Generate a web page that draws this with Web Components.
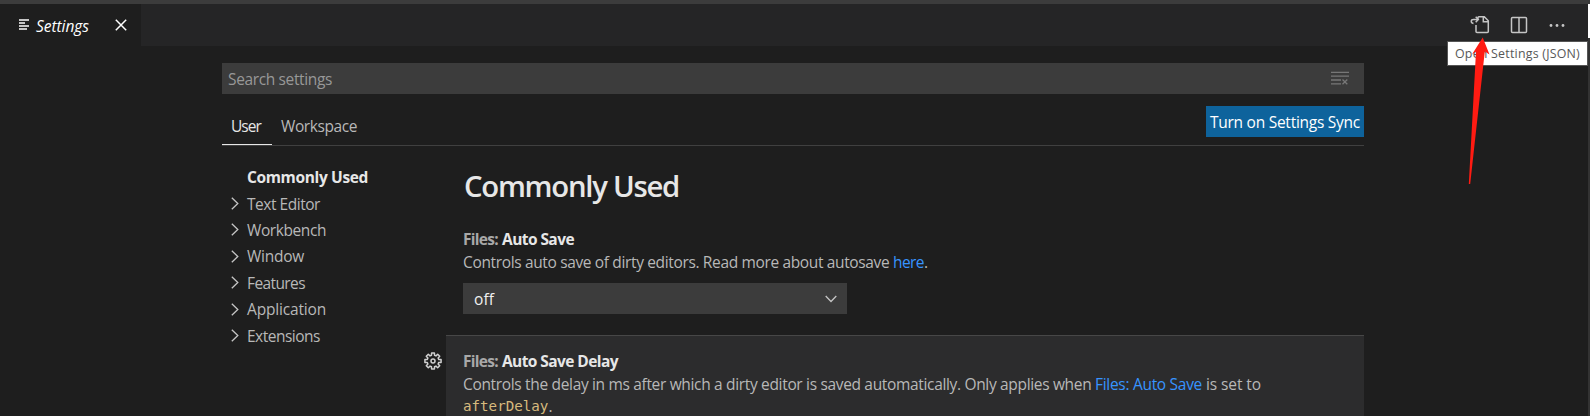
<!DOCTYPE html>
<html lang="en">
<head>
<meta charset="utf-8">
<title>Settings</title>
<style>
html,body{margin:0;background:#1e1e1e}
body{width:1590px;height:416px;overflow:hidden;font:15.5px/24px "Open Sans","Noto Sans",sans-serif;color:#b8b8b8}
</style>
</head>
<body>
<settings-window></settings-window>
<script>
const define = (name, html, ready) => customElements.define(name, class extends HTMLElement {
  constructor() {
    super();
    this.attachShadow({ mode: "open" }).innerHTML = html;
  }
  connectedCallback() { if (ready) ready(this, this.shadowRoot); }
});

/* A run of text whose tracking is adjusted to fill the width in "w". */
define("fit-text", `<style>:host{display:inline-block;white-space:pre}span{display:inline-block}</style><span><slot></slot></span>`, (el, root) => {
  const span = root.querySelector("span"), w = +el.getAttribute("w"), n = el.textContent.length;
  el.style.width = w + "px";
  span.style.letterSpacing = (w - span.getBoundingClientRect().width) / n + "px";
});

define("editor-tab", `<style>
:host{display:flex;align-items:center;width:141px;height:42px;background:#1e1e1e;color:#fff;font-style:italic;box-sizing:border-box;padding-left:18px}
.x{margin-left:26px}svg{display:block}fit-text{margin-left:6px;padding-top:1px}
</style>
<svg width="12" height="12" viewBox="0 0 12 12" fill="#c5c5c5"><path d="M1 0h10v2H1zM1 3h6v2H1zM1 6h10v2H1zM1 9h8v2H1z"/></svg>
<fit-text w="53">Settings</fit-text>
<svg class="x" width="12" height="12" viewBox="0 0 12 12" stroke="#fff" stroke-width="1.5"><path d="M.8.8l10.4 10.4M11.2.8L.8 11.2"/></svg>`);

define("editor-actions", `<style>
:host{display:flex;align-items:center;height:42px;gap:20px;margin-right:22px}svg{display:block}
</style>
<svg width="20" height="20" viewBox="0 0 20 20" fill="none" stroke="#c5c5c5" stroke-width="1.5"><path d="M8 4V2.5Q8 1.7 8.8 1.7H14.3L18.3 5.8V16.4Q18.3 17.4 17.3 17.4H7Q6 17.4 6 16.4V10M13.3 1.7V6.7H18.3M3.5 8.5C.4 7.7.6 4.4 3.5 4.4H8M5.7 1.8L8.3 4.4L5.7 7.2"/></svg>
<svg width="18" height="18" viewBox="0 0 18 18" fill="none" stroke="#c5c5c5" stroke-width="1.5"><rect x="1.5" y="1.5" width="15" height="15" rx="1"/><path d="M9 2v14"/></svg>
<svg width="18" height="18" viewBox="0 0 18 18" fill="#c5c5c5"><circle cx="3" cy="9.5" r="1.4"/><circle cx="9" cy="9.5" r="1.4"/><circle cx="15" cy="9.5" r="1.4"/></svg>`);

define("search-box", `<style>
:host{display:flex;align-items:center;justify-content:space-between;height:31px;background:#3c3c3c;color:#989898;padding:0 15px 0 6px}
svg{display:block;margin-top:-2px}fit-text{padding-top:1px}
</style>
<fit-text w="104">Search settings</fit-text>
<svg width="18" height="14" viewBox="0 0 18 14" stroke="#777" stroke-width="1.3"><path d="M0 1.3h18M0 5.1h18M0 9h10M0 12.8h10M11.5 8.5l4.8 4.8M16.3 8.5l-4.8 4.8"/></svg>`);

define("scope-tabs", `<style>
:host{display:flex;justify-content:space-between;height:39px;border-bottom:1px solid #404040;margin-top:12px}
.tabs{display:flex}
.tab{height:39px;padding:4px 11px 0 9px;line-height:32px;box-sizing:border-box}
.on{color:#e7e7e7;border-bottom:1px solid #e7e7e7}
button{all:unset;height:31px;width:158px;background:#0e639c;color:#fff;text-align:center;line-height:33px}
</style>
<div class="tabs"><div class="tab on"><fit-text w="30">User</fit-text></div><div class="tab"><fit-text w="76">Workspace</fit-text></div></div>
<button><fit-text w="150">Turn on Settings Sync</fit-text></button>`);

define("toc-item", `<style>
:host{display:flex;align-items:center;height:26.4px;line-height:26px}
svg{width:8px;height:13px;margin:0 8px 0 9px}
:host([selected]) svg{visibility:hidden}
:host([selected]){font-weight:700;color:#e7e7e7}
</style>
<svg viewBox="0 0 8 13" fill="none" stroke="#c5c5c5" stroke-width="1.3"><path d="M.8.7l6 5.8-6 5.8"/></svg><slot></slot>`);

define("setting-item", `<style>
:host{display:block;padding:0 17px}
.title{font-weight:700;height:24px;display:flex;gap:4px;color:#a8a8a8}
.name{color:#e7e7e7}
.desc{line-height:22px;white-space:nowrap}
</style>
<div class="title"><slot name="cat"></slot><span class="name"><slot name="name"></slot></span></div>
<div class="desc"><slot></slot></div>`);

define("select-box", `<style>
:host{display:flex;align-items:center;justify-content:space-between;width:384px;height:31px;background:#3c3c3c;color:#f0f0f0;box-sizing:border-box;padding:0 10px 0 11px}
fit-text{padding-top:1px}
</style><slot></slot>
<svg width="12" height="8" viewBox="0 0 12 8" fill="none" stroke="#c5c5c5" stroke-width="1.3"><path d="M.7 1l5.3 5.5L11.3 1"/></svg>`);

define("gear-icon", `<style>:host{display:block;width:18px;height:18px}svg{display:block}</style>
<svg width="18" height="18" viewBox="-9 -9 18 18" fill="none" stroke="#d0d0d0" stroke-width="1.5" stroke-linejoin="round"><path/><circle r="2"/></svg>`, (el, root) => {
  let d = "";
  for (let i = 0; i < 8; i++) for (const [off, r] of [[-15, 5.9], [-10, 8.2], [10, 8.2], [15, 5.9]]) {
    const a = (i * 45 + off) * Math.PI / 180;
    d += (d ? "L" : "M") + (r * Math.cos(a)).toFixed(2) + " " + (r * Math.sin(a)).toFixed(2);
  }
  root.querySelector("path").setAttribute("d", d + "Z");
});

define("tool-tip", `<style>
:host{position:absolute;left:1447px;top:41px;width:141px;height:25px;box-sizing:border-box;background:#fff;border:1px solid #555;color:#575757;font-size:12.4px;line-height:23px;padding-left:7px}
</style><slot></slot>`);

define("pointer-arrow", `<style>:host{position:absolute;left:1460px;top:36px}svg{display:block}</style>
<svg width="40" height="150" viewBox="0 0 40 150"><path fill="#ff1b12" d="M22.7 1.5L29.5 18.5L24.8 15.5L10.2 148H8.8L16 15.5L12 18.5Z"/></svg>`);

define("settings-window", `<style>
:host{display:block;position:relative;width:1590px;height:416px;overflow:hidden;background:#1e1e1e}
.top{height:4px;background:#3c3c3c}
.bar{display:flex;justify-content:space-between;height:42px;background:#252526;margin-right:2px}
.page{width:1142px;margin:17px 0 0 222px}
search-box{box-sizing:border-box}
.cols{display:grid;grid-template-columns:224px 918px}
nav{padding-top:18px}
h1{margin:20px 0 0 18px;font-size:29.3px;line-height:40px;font-weight:600;color:#e7e7e7;height:40px}
.first{margin-top:21px}
.row{display:flex;margin-left:-22px;margin-top:21px}
gear-icon{margin:17px 4px 0 0}
.panel{width:918px;height:90px;border-top:1px solid #474747;background:#2c2c2d;box-sizing:border-box;flex:none;padding-top:13px}
a{color:#3794ff}
code{font:14.2px/20px "DejaVu Sans Mono",monospace;color:#d7ba7d;position:relative;top:-1px}
select-box{margin:10px 0 0 17px}
.edge{position:absolute;right:0;top:0;width:2px;height:416px;background:linear-gradient(#3c3c3c 4px,#fff 4px 38px,#333 38px)}
</style>
<div class="top"></div>
<div class="bar"><editor-tab></editor-tab><editor-actions></editor-actions></div>
<div class="page">
<search-box></search-box>
<scope-tabs></scope-tabs>
<div class="cols">
<nav>
<toc-item selected><fit-text w="121">Commonly Used</fit-text></toc-item>
<toc-item><fit-text w="73">Text Editor</fit-text></toc-item>
<toc-item><fit-text w="79">Workbench</fit-text></toc-item>
<toc-item><fit-text w="57">Window</fit-text></toc-item>
<toc-item><fit-text w="58">Features</fit-text></toc-item>
<toc-item><fit-text w="79">Application</fit-text></toc-item>
<toc-item><fit-text w="73">Extensions</fit-text></toc-item>
</nav>
<main>
<h1><fit-text w="215">Commonly Used</fit-text></h1>
<setting-item class="first"><fit-text slot="cat" w="35">Files:</fit-text><fit-text slot="name" w="72">Auto Save</fit-text><fit-text w="430">Controls auto save of dirty editors. Read more about autosave </fit-text><a><fit-text w="31">here</fit-text></a>.</setting-item>
<select-box><fit-text w="20">off</fit-text></select-box>
<div class="row"><gear-icon></gear-icon><div class="panel">
<setting-item><fit-text slot="cat" w="35">Files:</fit-text><fit-text slot="name" w="116">Auto Save Delay</fit-text><fit-text w="632">Controls the delay in ms after which a dirty editor is saved automatically. Only applies when </fit-text><a><fit-text w="107">Files: Auto Save</fit-text></a><fit-text w="59"> is set to</fit-text><br><code>afterDelay</code>.</setting-item>
</div></div>
</main>
</div>
</div>
<div class="edge"></div>
<tool-tip><fit-text w="125">Open Settings (JSON)</fit-text></tool-tip>
<pointer-arrow></pointer-arrow>`);
</script>
</body>
</html>
